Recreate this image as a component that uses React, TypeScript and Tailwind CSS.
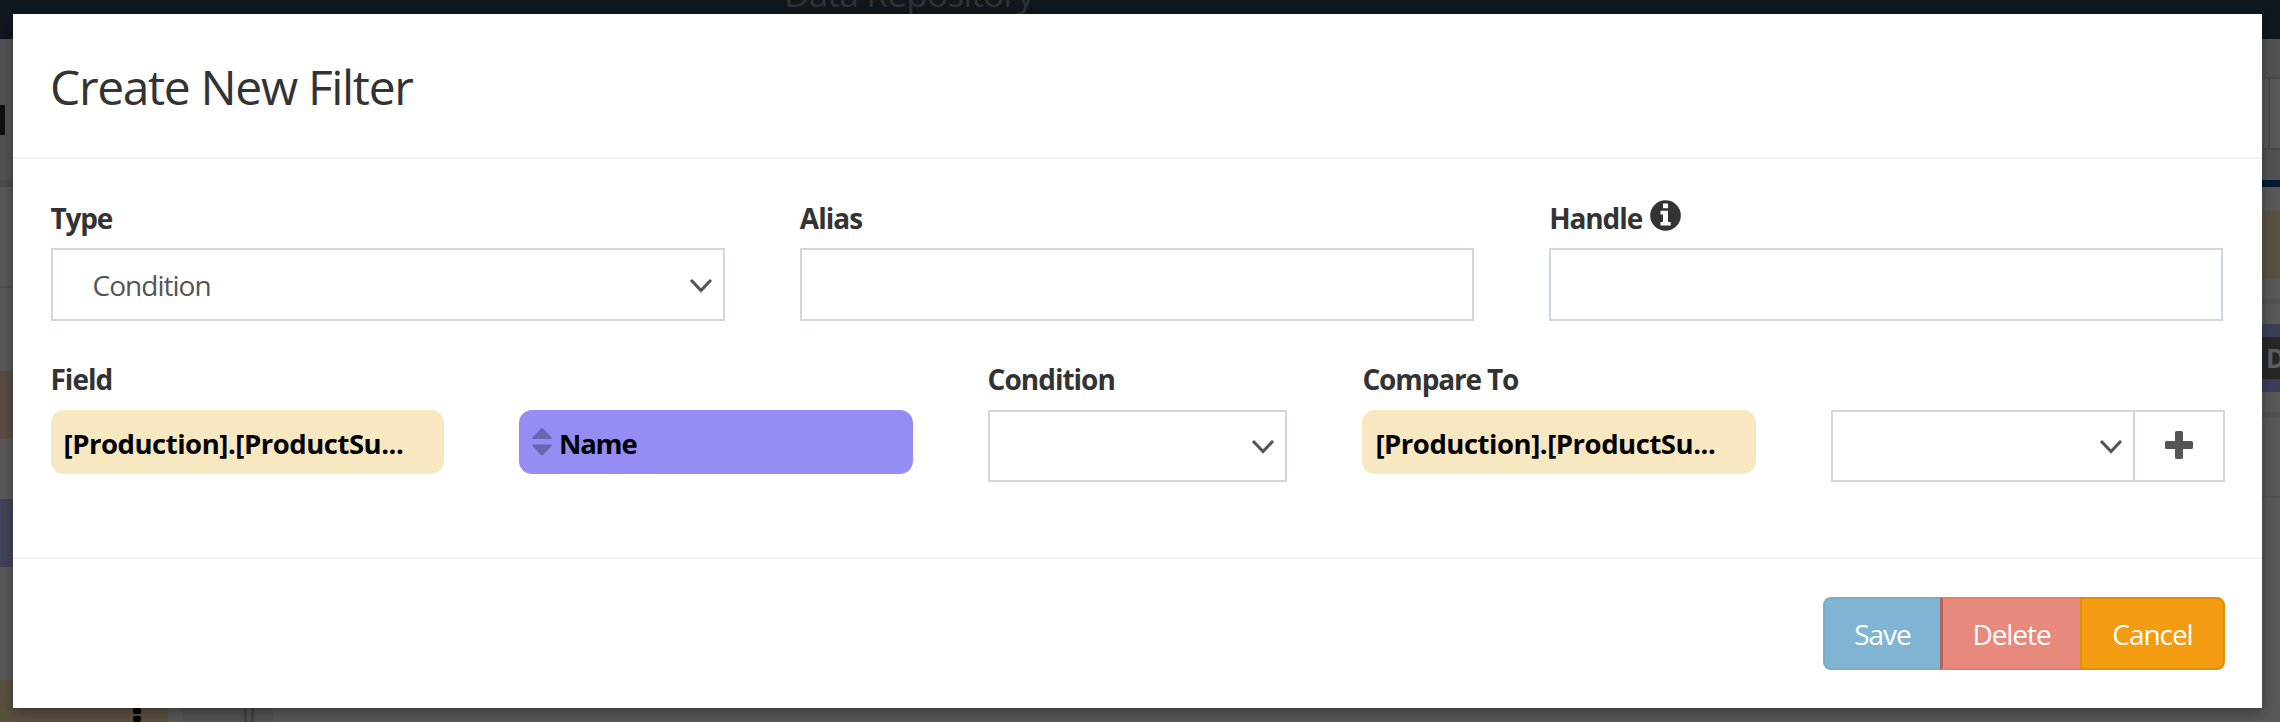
import React from 'react';

function Chevron() {
  return (
    <svg className="mt-[2px] h-[14px] w-[22px] shrink-0" viewBox="0 0 22 14" fill="none" stroke="#555" strokeWidth="3.2" strokeLinecap="round">
      <path d="M2 2 L11 11.5 L20 2" />
    </svg>
  );
}

function Label({ children, track = 'tracking-[-1px]' }: { children?: React.ReactNode; track?: string }) {
  return <div className={`flex h-[38px] items-center whitespace-pre text-[28px] font-bold leading-[38px] text-[#333] ${track}`}>{children}</div>;
}

function Pill({ children, color, track = 'tracking-[-0.47px]' }: { children: React.ReactNode; color: string; track?: string }) {
  return (
    <div className={`flex h-16 items-center overflow-hidden whitespace-pre rounded-[13px] pl-[13px] text-[27.5px] font-bold text-black ${color} ${track}`}>
      {children}
    </div>
  );
}

const box = 'flex border-2 border-[#d2d6de] bg-white';

export default function App() {
  return (
    <div className="relative h-[722px] w-[2280px] overflow-hidden bg-[#585858] font-['Open_Sans','Noto_Sans',sans-serif]">
      <div className="flex h-[39px] justify-start bg-[#10171d] pl-[784px]">
        <span className="-mt-[31px] whitespace-pre text-[35.5px] leading-[48px] tracking-[-0.97px] text-[#303335]">Data Repository</span>
      </div>
      <div className="flex h-[683px] justify-between">
        <div className="flex w-[400px] flex-col">
          <div className="flex h-[141px] bg-[#505254] pt-[66px]">
            <div className="h-[30px] w-[5px] bg-[#111]" />
          </div>
          <div className="h-[7px] bg-[#4a4a4f]" />
          <div className="h-[99px]" />
          <div className="h-[2px] bg-[#515151]" />
          <div className="h-[83px]" />
          <div className="h-[68px] bg-[#594c42]" />
          <div className="h-[60px]" />
          <div className="h-[68px] bg-[#42435a]" />
          <div className="h-[113px]" />
          <div className="flex h-[42px]">
            <div className="flex w-[168px] flex-col gap-[2px] bg-[#5a5040] pl-[133px] pt-[28px]">
              <div className="h-[7px] w-2 rounded-[2px] bg-black" />
              <div className="h-[7px] w-2 rounded-[2px] bg-black" />
            </div>
            <div className="w-[14px]" />
            <div className="flex w-[91px] gap-1 bg-[#505254] pl-[62px]">
              <div className="w-[3px] bg-[#434343]" />
              <div className="w-[3px] bg-[#434343]" />
            </div>
          </div>
        </div>
        <div className="flex w-[40px] flex-col">
          <div className="h-[38px] bg-[#505254]" />
          <div className="flex h-[73px] border-y-2 border-[#4a4a4b] bg-[#585858] pl-[28px]">
            <div className="w-[2px] bg-[#4a4a4b]" />
          </div>
          <div className="h-[30px] bg-[#505254]" />
          <div className="h-[7px] bg-[#021d33]" />
          <div className="h-6" />
          <div className="h-[68px] bg-[#5a5142]" />
          <div className="h-5" />
          <div className="h-[5px] bg-[#515151]" />
          <div className="h-5" />
          <div className="h-[68px] bg-[#3b3f5a] pt-[13px]">
            <div className="h-[42px] overflow-hidden rounded-l-[10px] bg-[#272727] pl-[26px] text-[26px] font-bold leading-[42px] text-[#606060]">D</div>
          </div>
          <div className="h-5" />
          <div className="h-[5px] bg-[#515151]" />
          <div className="h-[79px]" />
          <div className="h-[2px] bg-[#515151]" />
        </div>
      </div>

      <div className="absolute left-[13px] top-[14px] flex h-[694px] w-[2249px] flex-col bg-white shadow-[0_4px_12px_rgba(0,0,0,0.35)]">
        <header className="h-[145px] border-b-2 border-[#f4f4f4] pl-[37px] pt-[41px]">
          <h1 className="whitespace-pre text-[48px] leading-[64px] tracking-[-1.35px] text-[#333]">Create New Filter</h1>
        </header>

        <main className="h-[400px] border-b-2 border-[#f4f4f4] pt-[40px]">
          <div className="grid grid-cols-3 pr-px">
            <div className="px-[37.5px]">
              <Label track="tracking-[-1.2px]">Type</Label>
              <div className={`${box} mt-[11px] h-[73px] items-center justify-between pl-[40px] pr-[11px]`}>
                <span className="text-[28px] tracking-[-0.97px] text-[#555]">Condition</span>
                <Chevron />
              </div>
            </div>
            <div className="px-[37.5px]">
              <Label>Alias</Label>
              <div className={`${box} mt-[11px] h-[73px]`} />
            </div>
            <div className="px-[37.5px]">
              <Label track="tracking-[-1.1px]">
                <span>Handle</span>
                <svg className="-mt-[5px] ml-[8px] h-[31px] w-[31px]" viewBox="0 0 31 31">
                  <circle cx="15.5" cy="15.5" r="15.3" fill="#333" />
                  <path fill="#fff" d="M13 3.5h5v4.8h-5zM10.5 10.8H18V22h2.7v3.6H10.5V22H13v-7.6h-2.5z" />
                </svg>
              </Label>
              <div className={`${box} mt-[11px] h-[73px]`} />
            </div>
          </div>

          <div className="mt-[39px] grid grid-cols-[5fr_5fr_4fr_5fr_5fr]">
            <div className="px-[37.5px]">
              <Label>Field</Label>
              <div className="mt-[12px]"><Pill color="bg-[#f8e8c1]"><span className="pt-[3px]">[Production].[ProductSu...</span></Pill></div>
            </div>
            <div className="px-[37.5px] pt-[50px]">
              <Pill color="bg-[#958df4]" track="tracking-[-1.2px]">
                <svg className="mr-[7px] h-[28px] w-[20px]" viewBox="0 0 20 28" fill="#6b65af">
                  <path d="M9 .5q1-1 2 0L19.600 9.500q.8 1.500-1 1.500H1.400q-1.800 0-1-1.500zM9 27q1 1 2 0L19.600 18q.8-1.500-1-1.500H1.400q-1.800 0-1 1.500z" />
                </svg>
                <span className="pt-[3px]">Name</span>
              </Pill>
            </div>
            <div className="px-[37.5px]">
              <Label>Condition</Label>
              <div className={`${box} mt-[12px] h-[72px] items-center justify-end pr-[11px]`}><Chevron /></div>
            </div>
            <div className="px-[37.5px]">
              <Label track="tracking-[-1.15px]">Compare To</Label>
              <div className="mt-[12px]"><Pill color="bg-[#f8e8c1]"><span className="pt-[3px]">[Production].[ProductSu...</span></Pill></div>
            </div>
            <div className="px-[37.5px] pt-[50px]">
              <div className={`${box} h-[72px]`}>
                <div className="flex flex-1 items-center justify-end pr-[11px]"><Chevron /></div>
                <div className="flex w-[90px] items-center justify-center border-l-2 border-[#d2d6de] pb-[2px]">
                  <svg className="h-7 w-7" viewBox="0 0 28 28" fill="#555">
                    <path d="M11.500 0h5q1.500 0 1.500 1.500V10h8.500q1.500 0 1.500 1.500v5q0 1.500-1.500 1.500H18v8.500q0 1.500-1.500 1.500h-5q-1.500 0-1.500-1.500V18H1.500Q0 18 0 16.500v-5Q0 10 1.500 10H10V1.500Q10 0 11.500 0z" />
                  </svg>
                </div>
              </div>
            </div>
          </div>
        </main>

        <footer className="flex justify-end pr-[37px] pt-[38px] text-[28px] tracking-[-1.05px] text-white">
          <button className="h-[73px] w-[117px] rounded-l-[8px] border-2 border-r-0 border-[#7aabc9] bg-[#80b4d3]">Save</button>
          <button className="h-[73px] w-[140px] border-y-2 border-l-[3px] border-y-[#e67b6e] border-l-[#b2635e] bg-[#e8897e]">Delete</button>
          <button className="h-[73px] w-[145px] rounded-r-[8px] border-2 border-[#e08e0b] bg-[#f39c12]">Cancel</button>
        </footer>
      </div>
    </div>
  );
}
